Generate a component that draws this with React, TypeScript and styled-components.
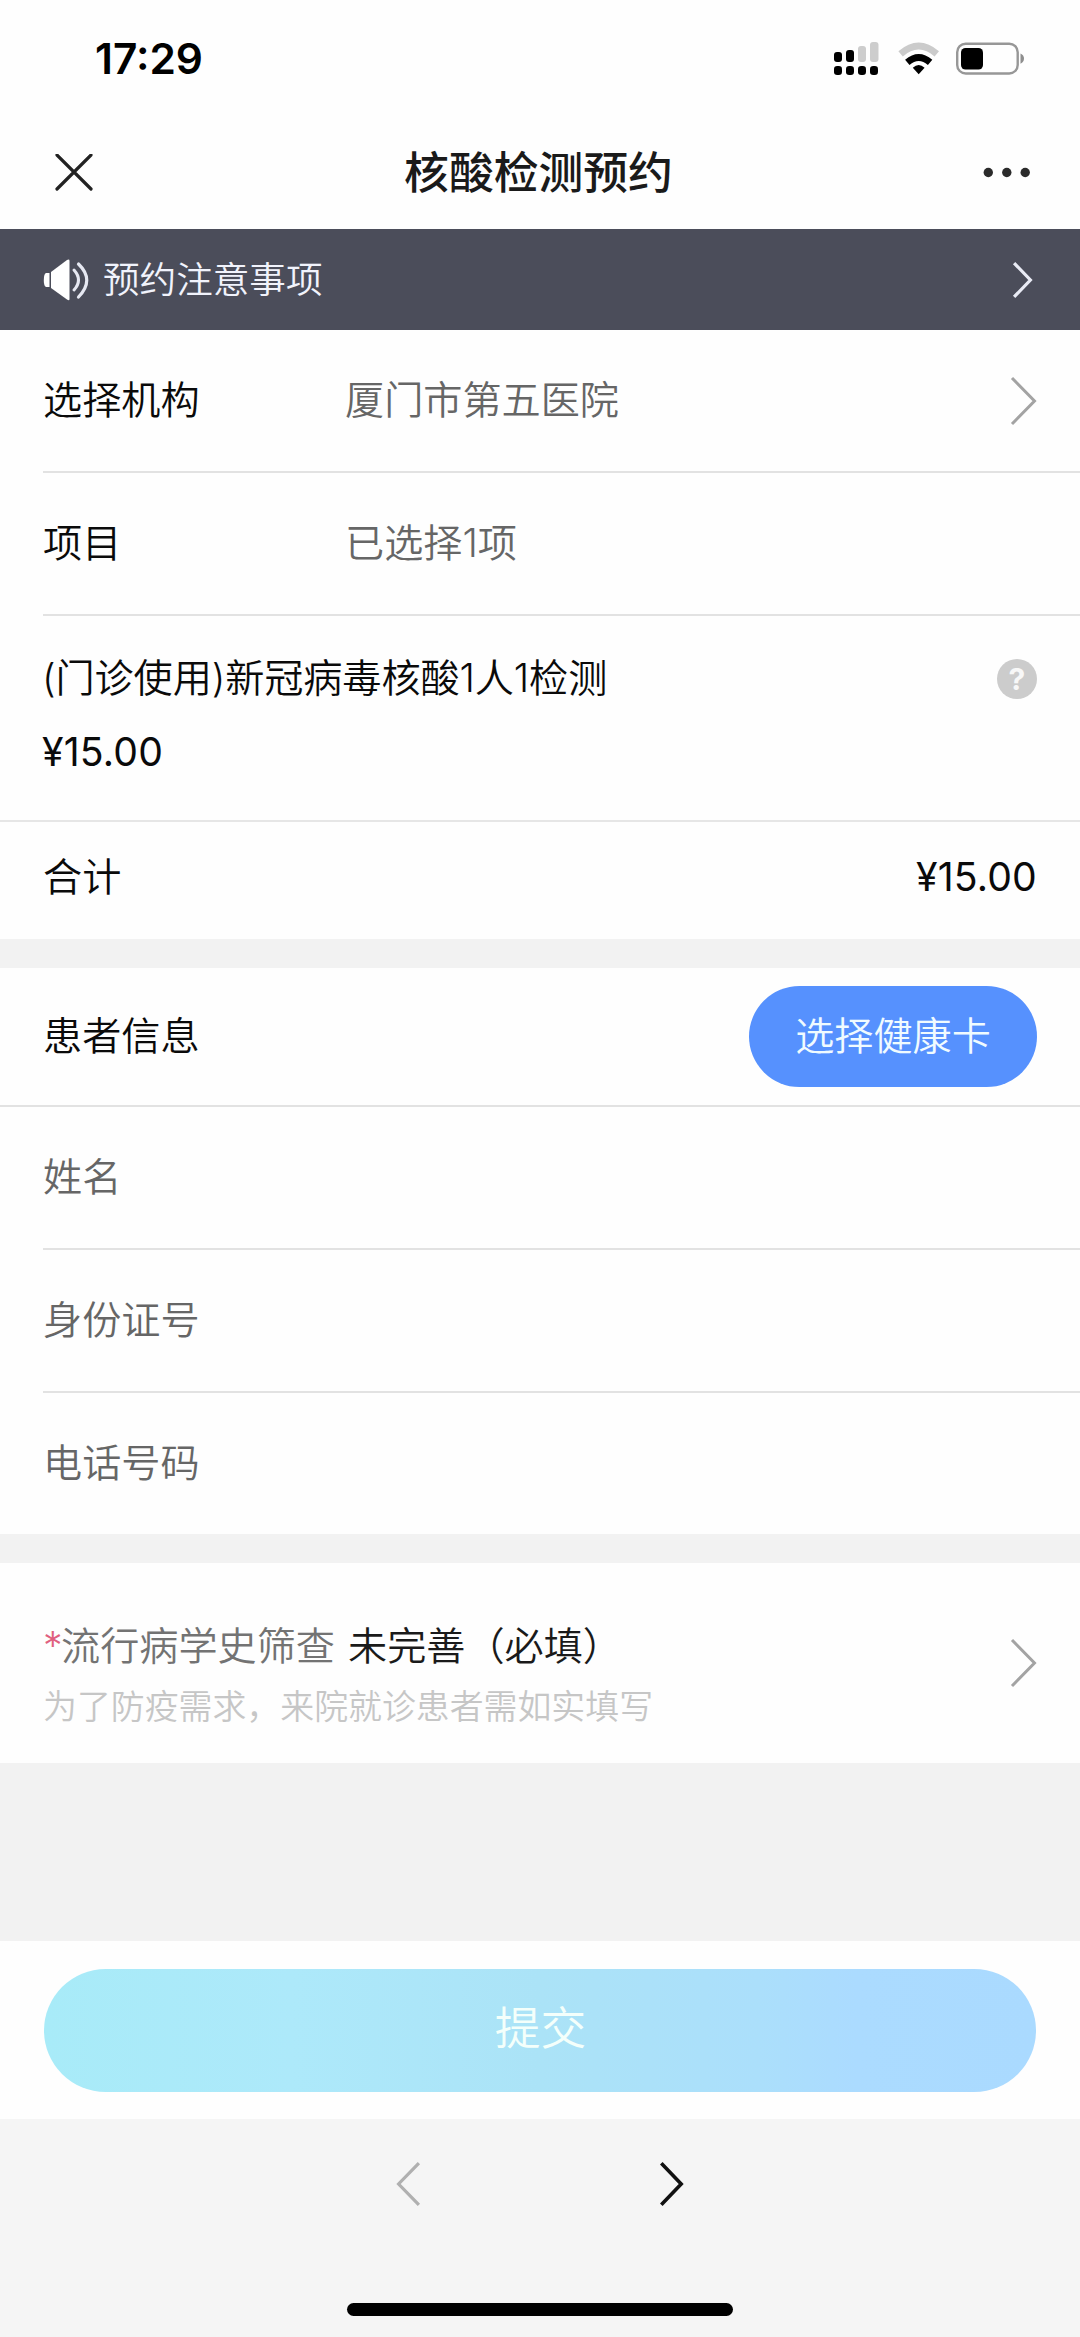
import React from "react";
import styled, { createGlobalStyle } from "styled-components";

const GlobalStyle = createGlobalStyle`
  * { box-sizing: border-box; }
  body {
    margin: 0;
    background: #f2f2f2;
    font-family: Inter, "Noto Sans CJK SC", sans-serif;
    -webkit-font-smoothing: antialiased;
  }
  button { font: inherit; border: 0; padding: 0; margin: 0; background: none; }
`;

const Screen = styled.main`
  display: flex;
  flex-direction: column;
  width: 1080px;
  height: 2337px;
  overflow: hidden;
  background: #f2f2f2;
  color: #0a0a0a;
  font-size: 39.15px;
  font-weight: 350;
  line-height: 54px;
`;

const StatusBar = styled.header`
  display: flex;
  justify-content: space-between;
  align-items: center;
  height: 116px;
  padding: 2px 55px 0 95px;
  background: #fefefe;
`;

const Clock = styled.time`
  font-size: 42.4px;
  font-weight: 600;
  color: #000;
`;

const StatusIcons = styled.div`
  display: flex;
  align-items: center;
  gap: 17.5px;
`;

const TitleBar = styled.nav`
  display: grid;
  grid-template-columns: 200px 1fr 200px;
  align-items: center;
  height: 113px;
  padding: 0 49px 0 55px;
  background: #fefefe;
`;

const Title = styled.h1`
  margin: 0;
  padding-right: 9px;
  text-align: center;
  font-size: 44.8px;
  font-weight: 500;
  color: #1a1a1a;
`;

const BarButton = styled.button<{ $end?: boolean }>`
  display: flex;
  justify-content: ${(p) => (p.$end ? "flex-end" : "flex-start")};
`;

const Notice = styled.section`
  display: flex;
  align-items: center;
  height: 101px;
  padding: 0 47px 0 43px;
  background: #4b4d5a;
  color: #f1f3fc;
  font-size: 36.6px;
`;

const NoticeText = styled.span`
  flex: 1;
  padding-left: 12px;
`;

const Card = styled.section`
  display: flex;
  flex-direction: column;
  background: #fefefe;
`;

const Row = styled.div<{ $height: number; $inset?: boolean; $line?: boolean }>`
  display: flex;
  align-items: center;
  height: ${(p) => p.$height}px;
  margin-left: ${(p) => (p.$inset ? 43 : 0)}px;
  padding: 0 43px 0 ${(p) => (p.$inset ? 0 : 43)}px;
  border-bottom: ${(p) => (p.$line ? "2px solid #e2e2e2" : "0")};
`;

const Label = styled.span<{ $muted?: boolean }>`
  flex: 0 0 302px;
  padding-bottom: 1px;
  color: ${(p) => (p.$muted ? "#666" : "#0a0a0a")};
`;

const Value = styled.span`
  flex: 1;
  padding-bottom: 1px;
  color: #666;
`;

const Item = styled.div`
  display: flex;
  justify-content: space-between;
  height: 206px;
  padding: 35px 43px 0 42px;
  border-bottom: 2px solid #e6e6e6;
`;

const ItemText = styled.div`
  display: flex;
  flex-direction: column;
  gap: 20px;
`;

const ItemName = styled.span`
  letter-spacing: -0.1px;
`;

const HelpBadge = styled.button`
  display: flex;
  align-items: center;
  justify-content: center;
  width: 40px;
  height: 40px;
  margin-top: 8px;
  border-radius: 50%;
  background: #ccc;
  color: #f8f8f8;
  font-size: 30px;
  font-weight: 700;
  line-height: 40px;
`;

const Price = styled.span`
  font-weight: 380;
  letter-spacing: 0.2px;
`;

const Spread = styled(Row)`
  justify-content: space-between;
`;

const Total = styled(Spread)`
  padding-bottom: 7px;
`;

const CardButton = styled.button`
  width: 288px;
  height: 101px;
  padding-bottom: 2px;
  border-radius: 51px;
  background: #5691fe;
  color: #f0fbff;
`;

const Gap = styled.div<{ $height: number }>`
  height: ${(p) => p.$height}px;
  background: #f2f2f2;
`;

const Survey = styled.div`
  display: flex;
  align-items: center;
  justify-content: space-between;
  height: 200px;
  padding: 0 43px 0 43px;
`;

const SurveyText = styled.div`
  display: flex;
  flex-direction: column;
  padding-top: 26px;
`;

const SurveyTitle = styled.div`
  display: flex;
  color: #737373;
`;

const Required = styled.span`
  width: 18px;
  color: #e0607e;
`;

const Pending = styled.span`
  margin-left: 13px;
  color: #1a1a1a;
`;

const Hint = styled.p`
  margin: 8px 0 0;
  font-size: 33.9px;
  line-height: 52px;
  color: #c6c6c6;
`;

const SubmitBar = styled.footer`
  display: flex;
  justify-content: center;
  align-items: center;
  height: 178px;
  padding: 0 44px;
  background: #fefefe;
`;

const SubmitButton = styled.button`
  width: 100%;
  height: 123px;
  padding: 0 0 2px 1px;
  border-radius: 62px;
  background: linear-gradient(90deg, #a8ebf8 0%, #ade9fa 25%, #abe3f7 50%, #abdffb 72%, #abdbff 82%, #aadaff 100%);
  color: #f4fffb;
  font-size: 45.8px;
`;

const BrowserBar = styled.div`
  display: flex;
  flex-direction: column;
  align-items: center;
  justify-content: space-between;
  flex: 1;
  padding: 42px 0 21px;
  background: #f5f5f5;
`;

const BrowserNav = styled.div`
  display: flex;
  gap: 238px;
`;

const HomeIndicator = styled.div`
  width: 386px;
  height: 13px;
  border-radius: 7px;
  background: #000;
`;

type ChevronProps = { w: number; h: number; color: string; stroke: number; back?: boolean };

const Chevron = ({ w, h, color, stroke, back }: ChevronProps) => {
  const pad = stroke / 2 + 0.5;
  const near = back ? w - pad : pad;
  const tip = back ? pad + 0.5 : w - pad - 0.5;
  return (
    <svg width={w} height={h} fill="none" stroke={color} strokeWidth={stroke}>
      <path d={`M${near} ${pad}L${tip} ${h / 2}L${near} ${h - pad}`} />
    </svg>
  );
};

const Signal = () => (
  <svg width="46" height="34" viewBox="834 42 46 34">
    <g fill="#000">
      <rect x="834" y="52" width="8" height="10" rx="3" />
      <rect x="846" y="50" width="8" height="12" rx="3" />
      <rect x="834" y="66" width="8" height="9" rx="3.2" />
      <rect x="846" y="66" width="8" height="9" rx="3.2" />
      <rect x="858" y="66" width="8" height="9" rx="3.2" />
      <rect x="870" y="66" width="8" height="9" rx="3.2" />
    </g>
    <g fill="#cdcdcd">
      <rect x="858" y="46" width="8" height="16" rx="3" />
      <rect x="870" y="42" width="8.5" height="20" rx="3" />
    </g>
  </svg>
);

const Wifi = () => (
  <svg width="41" height="34" viewBox="897 42 41 34" fill="none">
    <path d="M899.6 53.8Q917.7 38.2 935.8 53.8" stroke="#cbcbcb" strokeWidth="6.8" />
    <path d="M906.3 62.3Q917.7 52.6 929.1 62.3" stroke="#000" strokeWidth="6.8" />
    <path d="M911.8 67.8Q917.7 62.2 923.6 67.8L917.7 74.2Z" fill="#000" />
  </svg>
);

const Battery = () => (
  <svg width="69" height="34" viewBox="956 42 69 34">
    <rect x="957.2" y="43.7" width="60.5" height="29.8" rx="8.5" fill="none" stroke="#979797" strokeWidth="2.4" />
    <rect x="961" y="48" width="22" height="21.5" rx="4.5" fill="#000" />
    <path d="M1020.5 53.5Q1024 55 1024 58.5T1020.5 63.8Z" fill="#8e8e8e" />
  </svg>
);

const Speaker = () => (
  <svg width="48" height="44" viewBox="0 0 48 44" fill="none">
    <path d="M3 15h3.5v14H3Q0.8 28 0.8 22T3 15Z" fill="#fff" />
    <path d="M8 14L24 2Q26.5 0.8 26.5 3V41Q26.5 43 24 41.6L8 30Z" fill="#fff" />
    <path d="M31 12Q40 22 31 32" stroke="#e6e8f2" strokeWidth="3" strokeLinecap="round" />
    <path d="M35.5 6Q52 22 35.5 39" stroke="#e6e8f2" strokeWidth="3.2" strokeLinecap="round" />
  </svg>
);

export default function App() {
  return (
    <>
      <GlobalStyle />
      <Screen>
        <StatusBar>
          <Clock>17:29</Clock>
          <StatusIcons>
            <Signal />
            <Wifi />
            <Battery />
          </StatusIcons>
        </StatusBar>
        <TitleBar>
          <BarButton aria-label="关闭">
            <svg width="38" height="38" stroke="#222" strokeWidth="3.2" strokeLinecap="round">
              <path d="M2 1L36 35M36 1L2 35" />
            </svg>
          </BarButton>
          <Title>核酸检测预约</Title>
          <BarButton aria-label="更多" $end>
            <svg width="48" height="12" fill="#2b2b2b">
              <circle cx="5.3" cy="5.5" r="4.7" />
              <circle cx="23.8" cy="5.5" r="4.7" />
              <circle cx="42.2" cy="5.5" r="4.7" />
            </svg>
          </BarButton>
        </TitleBar>
        <Notice>
          <Speaker />
          <NoticeText>预约注意事项</NoticeText>
          <Chevron w={21} h={38} color="#e9ebf5" stroke={3.2} />
        </Notice>

        <Card>
          <Row $height={143} $inset $line>
            <Label>选择机构</Label>
            <Value>厦门市第五医院</Value>
            <Chevron w={27} h={50} color="#a3a3a3" stroke={3} />
          </Row>
          <Row $height={143} $inset $line>
            <Label>项目</Label>
            <Value>已选择1项</Value>
          </Row>
          <Item>
            <ItemText>
              <ItemName>(门诊使用)新冠病毒核酸1人1检测</ItemName>
              <Price>¥15.00</Price>
            </ItemText>
            <HelpBadge>?</HelpBadge>
          </Item>
          <Total $height={117}>
            <span>合计</span>
            <Price>¥15.00</Price>
          </Total>
        </Card>
        <Gap $height={29} />
        <Card>
          <Spread $height={139} $line>
            <Label>患者信息</Label>
            <CardButton>选择健康卡</CardButton>
          </Spread>
          <Row $height={143} $inset $line>
            <Label $muted>姓名</Label>
          </Row>
          <Row $height={143} $inset $line>
            <Label $muted>身份证号</Label>
          </Row>
          <Row $height={141} $inset>
            <Label $muted>电话号码</Label>
          </Row>
        </Card>
        <Gap $height={29} />
        <Card>
          <Survey>
            <SurveyText>
              <SurveyTitle>
                <Required>*</Required>
                <span>流行病学史筛查</span>
                <Pending>未完善（必填）</Pending>
              </SurveyTitle>
              <Hint>为了防疫需求，来院就诊患者需如实填写</Hint>
            </SurveyText>
            <Chevron w={27} h={50} color="#a3a3a3" stroke={3} />
          </Survey>
        </Card>
        <Gap $height={178} />
        <SubmitBar>
          <SubmitButton>提交</SubmitButton>
        </SubmitBar>
        <BrowserBar>
          <BrowserNav>
            <Chevron w={25} h={46} color="#b0b0b0" stroke={3.2} back />
            <Chevron w={25} h={46} color="#111" stroke={3.6} />
          </BrowserNav>
          <HomeIndicator />
        </BrowserBar>
      </Screen>
    </>
  );
}
